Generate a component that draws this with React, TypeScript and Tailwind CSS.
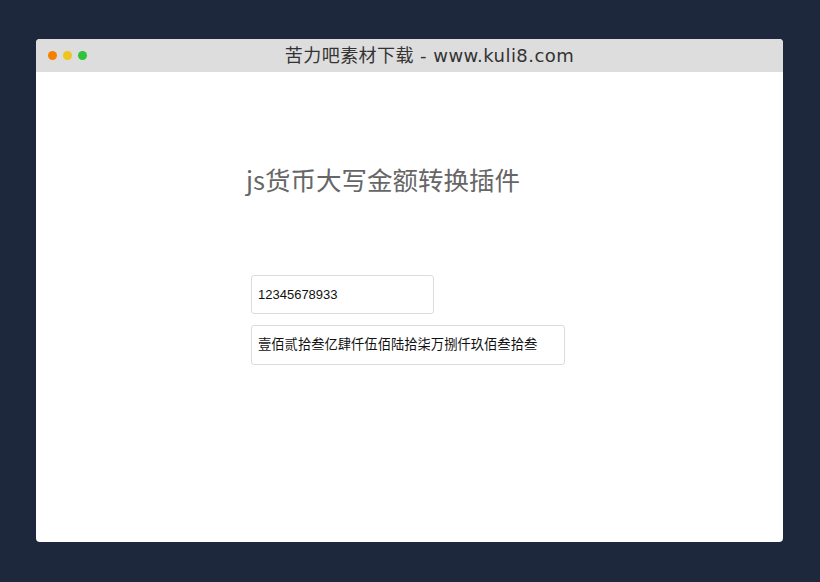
export default function App() {
  return (
    <div className="w-[820px] h-[582px] bg-[#1e283d] pt-[39px] pl-[36px]">
      <div className="w-[747px] h-[503px] rounded-[4px] overflow-hidden bg-white flex flex-col">
        <div className="h-[33px] bg-[#dddddd] flex items-center relative shrink-0">
          <div className="flex gap-[6px] pl-[12px]">
            <span className="w-[9px] h-[9px] rounded-full bg-[#f77f00]" />
            <span className="w-[9px] h-[9px] rounded-full bg-[#eec51d]" />
            <span className="w-[9px] h-[9px] rounded-full bg-[#2dc33a]" />
          </div>
          <div className="absolute inset-0 flex items-center justify-center pl-[40px] text-[18px] text-[#333] font-['DejaVu_Sans','Noto_Sans_CJK_SC',sans-serif] tracking-[0.45px]">
            苦力吧素材下载 - www.kuli8.com
          </div>
        </div>
        <div className="flex-1 pl-[210px] pt-[90px]">
          <h1 className="text-[25.5px] leading-[34px] text-[#666] font-['Noto_Sans_CJK_SC',sans-serif]">
            js货币大写金额转换插件
          </h1>
          <div className="pl-[5px] pt-[79px] flex flex-col gap-[11px]">
            <div className="w-[183px] h-[39px] border border-[#dcdcdc] rounded-[3px] flex items-center pl-[6px] text-[13px] text-[#111] font-['Liberation_Sans',sans-serif]">
              12345678933
            </div>
            <div className="w-[314px] h-[40px] border border-[#dcdcdc] rounded-[3px] flex items-center pl-[6px] text-[13.3px] text-[#111] font-['Liberation_Sans','Noto_Sans_CJK_SC',sans-serif]">
              壹佰贰拾叁亿肆仟伍佰陆拾柒万捌仟玖佰叁拾叁
            </div>
          </div>
        </div>
      </div>
    </div>
  );
}
